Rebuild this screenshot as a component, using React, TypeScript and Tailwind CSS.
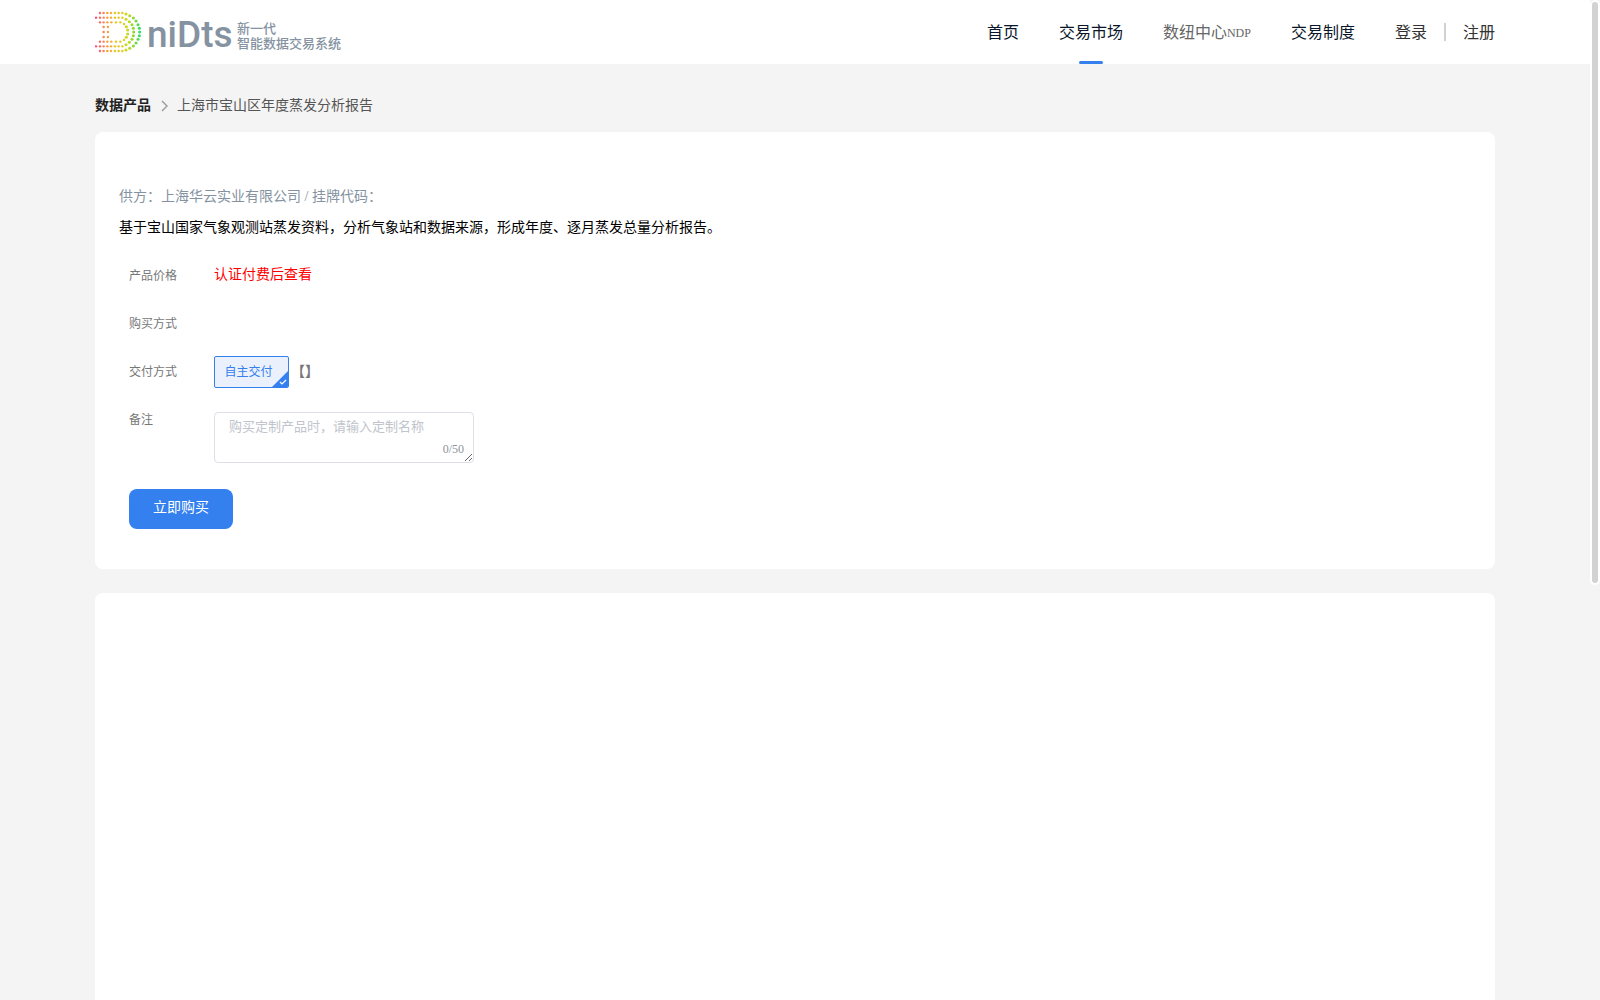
import { useState } from "react";
import type { ReactNode } from "react";

const outerArc = [[108, 27], [119, 32], [130, 39], [138, 48], [144, 59], [148, 70]];
const middleArc = [[108, 43], [118, 50], [126, 59], [130, 70]];
const innerArc = [[102, 57], [109, 65], [113, 75]];

const mirror = (points: number[][]) => [...points, ...points.map(([x, y]) => [x, 162 - y])];

const dots = mirror([
  ...[30, 41, 52, 63, 75, 86, 97].map((x) => [x, 24]),
  ...outerArc,
  ...[18, 30, 41, 52, 63, 75, 86, 97].map((x) => [x, 38]),
  ...middleArc,
  ...[30, 41, 52, 64, 78, 91].map((x) => [x, 52]),
  ...innerArc,
]).concat([[149, 81], [131, 81]], [66, 81, 96].flatMap((y) => [[41, y], [54, y]]));

function DotMark() {
  return (
    <svg viewBox="15 18 144 126" className="h-[42px] w-12 shrink-0" aria-hidden="true">
      <defs>
        <linearGradient id="spectrum" gradientUnits="userSpaceOnUse" x1="16" y1="0" x2="150" y2="0">
          <stop offset="0" stopColor="#ff3d75" />
          <stop offset="0.18" stopColor="#ff8252" />
          <stop offset="0.42" stopColor="#efc01c" />
          <stop offset="0.72" stopColor="#c9d91f" />
          <stop offset="0.9" stopColor="#7bd83c" />
          <stop offset="1" stopColor="#2fdc6c" />
        </linearGradient>
      </defs>
      <g fill="url(#spectrum)">
        {dots.map(([x, y], i) => (
          <circle key={i} cx={x} cy={y} r={x > 105 ? 4.6 : 3.6} />
        ))}
      </g>
    </svg>
  );
}

function NavLink({ children, tone = "text-[#0a1629]", active = false }: { children: ReactNode; tone?: string; active?: boolean }) {
  return (
    <a href="#" className={`relative flex h-16 items-center pt-0.5 whitespace-nowrap ${tone}`}>
      {children}
      {active && <span className="absolute bottom-0 left-1/2 h-[3px] w-6 -translate-x-1/2 rounded-sm bg-[#3480ee]" />}
    </a>
  );
}

function Row({ label, children }: { label: ReactNode; children?: ReactNode }) {
  return (
    <div className="flex min-h-8 items-start">
      <div className="w-[85px] shrink-0 text-xs leading-8 text-[#777]">{label}</div>
      {children}
    </div>
  );
}

export default function App() {
  const [note, setNote] = useState("");
  return (
    <div className="flex h-screen bg-[#f4f4f4] font-['Liberation_Serif','Noto_Sans_CJK_SC',sans-serif] text-sm">
      <div className="min-w-0 flex-1 overflow-y-auto">
        <header className="bg-white">
          <div className="mx-auto flex h-16 max-w-[1400px] items-center justify-between">
            <a href="#" className="flex items-center text-[#8592a1]">
              <DotMark />
              <span className="ml-1 w-[86px] pt-1 font-['Roboto',sans-serif] text-[37px] leading-none font-medium">niDts</span>
              <span className="ml-1 pt-1.5 font-['Noto_Sans_CJK_SC',sans-serif] text-[13px] leading-[15px] font-medium whitespace-nowrap">
                新一代
                <br />
                智能数据交易系统
              </span>
            </a>
            <nav className="flex items-center gap-10 text-base">
              <NavLink>首页</NavLink>
              <NavLink active>交易市场</NavLink>
              <NavLink tone="text-[#666]">
                数纽中心<span className="text-xs">NDP</span>
              </NavLink>
              <NavLink>交易制度</NavLink>
              <div className="flex items-center gap-[17px]">
                <NavLink tone="text-[#333]">登录</NavLink>
                <span className="h-[18px] w-0.5 bg-[#d2d2d2]" />
                <NavLink tone="text-[#333]">注册</NavLink>
              </div>
            </nav>
          </div>
        </header>

        <main className="mx-auto max-w-[1400px]">
          <nav aria-label="breadcrumb" className="flex items-center gap-2 pt-8 pb-4 leading-5 text-[#555]">
            <a href="#" className="font-bold text-[#222]">数据产品</a>
            <svg viewBox="0 0 10 12" className="h-3 w-2.5" fill="none" stroke="#999" strokeWidth="1.4" aria-hidden="true">
              <path d="M3 1l5 5-5 5" />
            </svg>
            <span>上海市宝山区年度蒸发分析报告</span>
          </nav>

          <section className="rounded-lg bg-white px-6 pt-[50px] pb-10">
            <p className="leading-[30px] text-[#8592a1]">供方：上海华云实业有限公司 / 挂牌代码：</p>
            <p className="leading-8 text-black">基于宝山国家气象观测站蒸发资料，分析气象站和数据来源，形成年度、逐月蒸发总量分析报告。</p>
            <form className="flex flex-col items-stretch gap-4 px-2.5 pt-4" onSubmit={(e) => e.preventDefault()}>
              <Row label="产品价格">
                <span className="leading-[30px] text-[#f00]">认证付费后查看</span>
              </Row>
              <Row label="购买方式" />
              <Row label="交付方式">
                <button type="button" className="relative h-8 w-[75px] overflow-hidden rounded-xs border border-[#3480ee] bg-[#eaf1fd] pr-1.5 text-xs text-[#3480ee]">
                  自主交付
                  <svg viewBox="0 0 16 16" className="absolute right-0 bottom-0 size-4" aria-hidden="true">
                    <path d="M16 0v16H0z" fill="#3480ee" />
                    <path d="M8 11l2 2 4-4" fill="none" stroke="#fff" strokeWidth="1.2" />
                  </svg>
                </button>
                <span className="ml-0.5 text-sm leading-8 font-bold text-[#777]">【】</span>
              </Row>
              <Row label={<label htmlFor="note">备注</label>}>
                <div className="relative mt-2">
                  <textarea
                    id="note"
                    maxLength={50}
                    value={note}
                    onChange={(e) => setNote(e.target.value)}
                    placeholder="购买定制产品时，请输入定制名称"
                    className="block h-[51px] w-[260px] rounded border border-[#dcdfe6] bg-white px-3.5 py-1 text-[13px] leading-5 text-[#555] placeholder:text-[#c0c4cc]"
                  />
                  <span className="absolute right-2.5 bottom-1.5 text-xs text-[#909399]">{note.length}/50</span>
                </div>
              </Row>
              <button type="submit" className="mt-2.5 h-10 self-start rounded-lg bg-[#3480ee] px-6 pb-0.5 text-white">
                立即购买
              </button>
            </form>
          </section>

          <section className="mt-6 mb-8 min-h-[1084px] rounded-lg bg-white" />
        </main>
      </div>
      <div className="w-2.5 shrink-0" aria-hidden="true">
        <div className="h-[58.5%] rounded-full border-2 border-white bg-[#d2d2d2]" />
      </div>
    </div>
  );
}
